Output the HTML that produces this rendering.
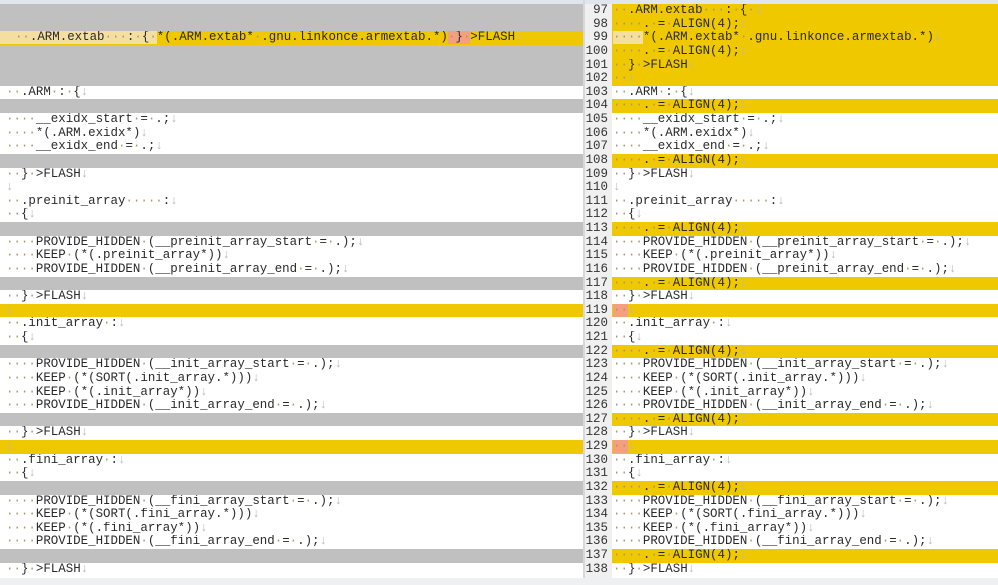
<!DOCTYPE html>
<html><head><meta charset="utf-8"><style>
body{margin:0;width:998px;height:585px;overflow:hidden;background:#fff;font-family:"Liberation Mono",monospace;font-size:12.45px;color:#2a2a2a;position:relative}
.top{position:absolute;left:0;top:0;width:998px;height:4px;background:#dfe6ee}
.pane{position:absolute;top:4px}
#L{left:0;width:583px}
#R{left:612px;width:386px}
#N{left:585px;width:27px;top:4px;background:#f0f0f0;height:581px;position:absolute}
.sep{position:absolute;left:583px;top:0;width:2px;height:585px;background:#d8d8d8}
.r{height:13.64px;line-height:13.64px;white-space:pre;padding-left:6px;overflow:hidden}
#R .r{padding-left:1px}
.n{height:13.64px;line-height:13.64px;text-align:right;padding-right:4px;color:#333}
.g{background:#c0c0c0}
.y{background:#f0c800}
.ly{background:#f4dea0}
.s{background:#f4a080}
b{font-weight:normal;color:#a89870}
i{font-style:normal;color:#b8b8b8}
.bot{position:absolute;left:0;top:578px;width:998px;height:7px;background:#eef0f2}
</style></head><body>
<div class="top"></div>
<div class="pane" id="L">
<div class="r g"> </div>
<div class="r g"> </div>
<div class="r y" style="padding-left:0"><span class="ly">  <b>··</b>.ARM.extab<b>···</b>:<b>·</b>{<b>·</b></span>*(.ARM.extab*<b>·</b>.gnu.linkonce.armextab.*)<span class="s"><b>·</b>}<b>·</b></span>&gt;FLASH<i>↓</i></div>
<div class="r g"> </div>
<div class="r g"> </div>
<div class="r g"> </div>
<div class="r"><b>··</b>.ARM<b>·</b>:<b>·</b>{<i>↓</i></div>
<div class="r g"> </div>
<div class="r"><b>····</b>__exidx_start<b>·</b>=<b>·</b>.;<i>↓</i></div>
<div class="r"><b>····</b>*(.ARM.exidx*)<i>↓</i></div>
<div class="r"><b>····</b>__exidx_end<b>·</b>=<b>·</b>.;<i>↓</i></div>
<div class="r g"> </div>
<div class="r"><b>··</b>}<b>·</b>&gt;FLASH<i>↓</i></div>
<div class="r"><i>↓</i></div>
<div class="r"><b>··</b>.preinit_array<b>·····</b>:<i>↓</i></div>
<div class="r"><b>··</b>{<i>↓</i></div>
<div class="r g"> </div>
<div class="r"><b>····</b>PROVIDE_HIDDEN<b>·</b>(__preinit_array_start<b>·</b>=<b>·</b>.);<i>↓</i></div>
<div class="r"><b>····</b>KEEP<b>·</b>(*(.preinit_array*))<i>↓</i></div>
<div class="r"><b>····</b>PROVIDE_HIDDEN<b>·</b>(__preinit_array_end<b>·</b>=<b>·</b>.);<i>↓</i></div>
<div class="r g"> </div>
<div class="r"><b>··</b>}<b>·</b>&gt;FLASH<i>↓</i></div>
<div class="r y"><i>↓</i></div>
<div class="r"><b>··</b>.init_array<b>·</b>:<i>↓</i></div>
<div class="r"><b>··</b>{<i>↓</i></div>
<div class="r g"> </div>
<div class="r"><b>····</b>PROVIDE_HIDDEN<b>·</b>(__init_array_start<b>·</b>=<b>·</b>.);<i>↓</i></div>
<div class="r"><b>····</b>KEEP<b>·</b>(*(SORT(.init_array.*)))<i>↓</i></div>
<div class="r"><b>····</b>KEEP<b>·</b>(*(.init_array*))<i>↓</i></div>
<div class="r"><b>····</b>PROVIDE_HIDDEN<b>·</b>(__init_array_end<b>·</b>=<b>·</b>.);<i>↓</i></div>
<div class="r g"> </div>
<div class="r"><b>··</b>}<b>·</b>&gt;FLASH<i>↓</i></div>
<div class="r y"><i>↓</i></div>
<div class="r"><b>··</b>.fini_array<b>·</b>:<i>↓</i></div>
<div class="r"><b>··</b>{<i>↓</i></div>
<div class="r g"> </div>
<div class="r"><b>····</b>PROVIDE_HIDDEN<b>·</b>(__fini_array_start<b>·</b>=<b>·</b>.);<i>↓</i></div>
<div class="r"><b>····</b>KEEP<b>·</b>(*(SORT(.fini_array.*)))<i>↓</i></div>
<div class="r"><b>····</b>KEEP<b>·</b>(*(.fini_array*))<i>↓</i></div>
<div class="r"><b>····</b>PROVIDE_HIDDEN<b>·</b>(__fini_array_end<b>·</b>=<b>·</b>.);<i>↓</i></div>
<div class="r g"> </div>
<div class="r"><b>··</b>}<b>·</b>&gt;FLASH<i>↓</i></div>
</div>
<div class="sep"></div>
<div id="N">
<div class="n">97</div><div class="n">98</div><div class="n">99</div><div class="n">100</div><div class="n">101</div><div class="n">102</div><div class="n">103</div><div class="n">104</div><div class="n">105</div><div class="n">106</div><div class="n">107</div><div class="n">108</div><div class="n">109</div><div class="n">110</div><div class="n">111</div><div class="n">112</div><div class="n">113</div><div class="n">114</div><div class="n">115</div><div class="n">116</div><div class="n">117</div><div class="n">118</div><div class="n">119</div><div class="n">120</div><div class="n">121</div><div class="n">122</div><div class="n">123</div><div class="n">124</div><div class="n">125</div><div class="n">126</div><div class="n">127</div><div class="n">128</div><div class="n">129</div><div class="n">130</div><div class="n">131</div><div class="n">132</div><div class="n">133</div><div class="n">134</div><div class="n">135</div><div class="n">136</div><div class="n">137</div><div class="n">138</div>
</div>
<div class="pane" id="R">
<div class="r y"><b>··</b>.ARM.extab<b>···</b>:<b>·</b>{<b>·</b><i>↓</i></div>
<div class="r y"><b>····</b>.<b>·</b>=<b>·</b>ALIGN(4);<i>↓</i></div>
<div class="r y"><span class="ly"><b>····</b></span>*(.ARM.extab*<b>·</b>.gnu.linkonce.armextab.*)<i>↓</i></div>
<div class="r y"><b>····</b>.<b>·</b>=<b>·</b>ALIGN(4);<i>↓</i></div>
<div class="r y"><b>··</b>}<b>·</b>&gt;FLASH<i>↓</i></div>
<div class="r y"><b>··</b><i>↓</i></div>
<div class="r"><b>··</b>.ARM<b>·</b>:<b>·</b>{<i>↓</i></div>
<div class="r y"><b>····</b>.<b>·</b>=<b>·</b>ALIGN(4);<i>↓</i></div>
<div class="r"><b>····</b>__exidx_start<b>·</b>=<b>·</b>.;<i>↓</i></div>
<div class="r"><b>····</b>*(.ARM.exidx*)<i>↓</i></div>
<div class="r"><b>····</b>__exidx_end<b>·</b>=<b>·</b>.;<i>↓</i></div>
<div class="r y"><b>····</b>.<b>·</b>=<b>·</b>ALIGN(4);<i>↓</i></div>
<div class="r"><b>··</b>}<b>·</b>&gt;FLASH<i>↓</i></div>
<div class="r"><i>↓</i></div>
<div class="r"><b>··</b>.preinit_array<b>·····</b>:<i>↓</i></div>
<div class="r"><b>··</b>{<i>↓</i></div>
<div class="r y"><b>····</b>.<b>·</b>=<b>·</b>ALIGN(4);<i>↓</i></div>
<div class="r"><b>····</b>PROVIDE_HIDDEN<b>·</b>(__preinit_array_start<b>·</b>=<b>·</b>.);<i>↓</i></div>
<div class="r"><b>····</b>KEEP<b>·</b>(*(.preinit_array*))<i>↓</i></div>
<div class="r"><b>····</b>PROVIDE_HIDDEN<b>·</b>(__preinit_array_end<b>·</b>=<b>·</b>.);<i>↓</i></div>
<div class="r y"><b>····</b>.<b>·</b>=<b>·</b>ALIGN(4);<i>↓</i></div>
<div class="r"><b>··</b>}<b>·</b>&gt;FLASH<i>↓</i></div>
<div class="r y"><span class="s"><b>··</b></span><i>↓</i></div>
<div class="r"><b>··</b>.init_array<b>·</b>:<i>↓</i></div>
<div class="r"><b>··</b>{<i>↓</i></div>
<div class="r y"><b>····</b>.<b>·</b>=<b>·</b>ALIGN(4);<i>↓</i></div>
<div class="r"><b>····</b>PROVIDE_HIDDEN<b>·</b>(__init_array_start<b>·</b>=<b>·</b>.);<i>↓</i></div>
<div class="r"><b>····</b>KEEP<b>·</b>(*(SORT(.init_array.*)))<i>↓</i></div>
<div class="r"><b>····</b>KEEP<b>·</b>(*(.init_array*))<i>↓</i></div>
<div class="r"><b>····</b>PROVIDE_HIDDEN<b>·</b>(__init_array_end<b>·</b>=<b>·</b>.);<i>↓</i></div>
<div class="r y"><b>····</b>.<b>·</b>=<b>·</b>ALIGN(4);<i>↓</i></div>
<div class="r"><b>··</b>}<b>·</b>&gt;FLASH<i>↓</i></div>
<div class="r y"><span class="s"><b>··</b></span><i>↓</i></div>
<div class="r"><b>··</b>.fini_array<b>·</b>:<i>↓</i></div>
<div class="r"><b>··</b>{<i>↓</i></div>
<div class="r y"><b>····</b>.<b>·</b>=<b>·</b>ALIGN(4);<i>↓</i></div>
<div class="r"><b>····</b>PROVIDE_HIDDEN<b>·</b>(__fini_array_start<b>·</b>=<b>·</b>.);<i>↓</i></div>
<div class="r"><b>····</b>KEEP<b>·</b>(*(SORT(.fini_array.*)))<i>↓</i></div>
<div class="r"><b>····</b>KEEP<b>·</b>(*(.fini_array*))<i>↓</i></div>
<div class="r"><b>····</b>PROVIDE_HIDDEN<b>·</b>(__fini_array_end<b>·</b>=<b>·</b>.);<i>↓</i></div>
<div class="r y"><b>····</b>.<b>·</b>=<b>·</b>ALIGN(4);<i>↓</i></div>
<div class="r"><b>··</b>}<b>·</b>&gt;FLASH<i>↓</i></div>
</div>
<div class="bot"></div>
</body></html>
